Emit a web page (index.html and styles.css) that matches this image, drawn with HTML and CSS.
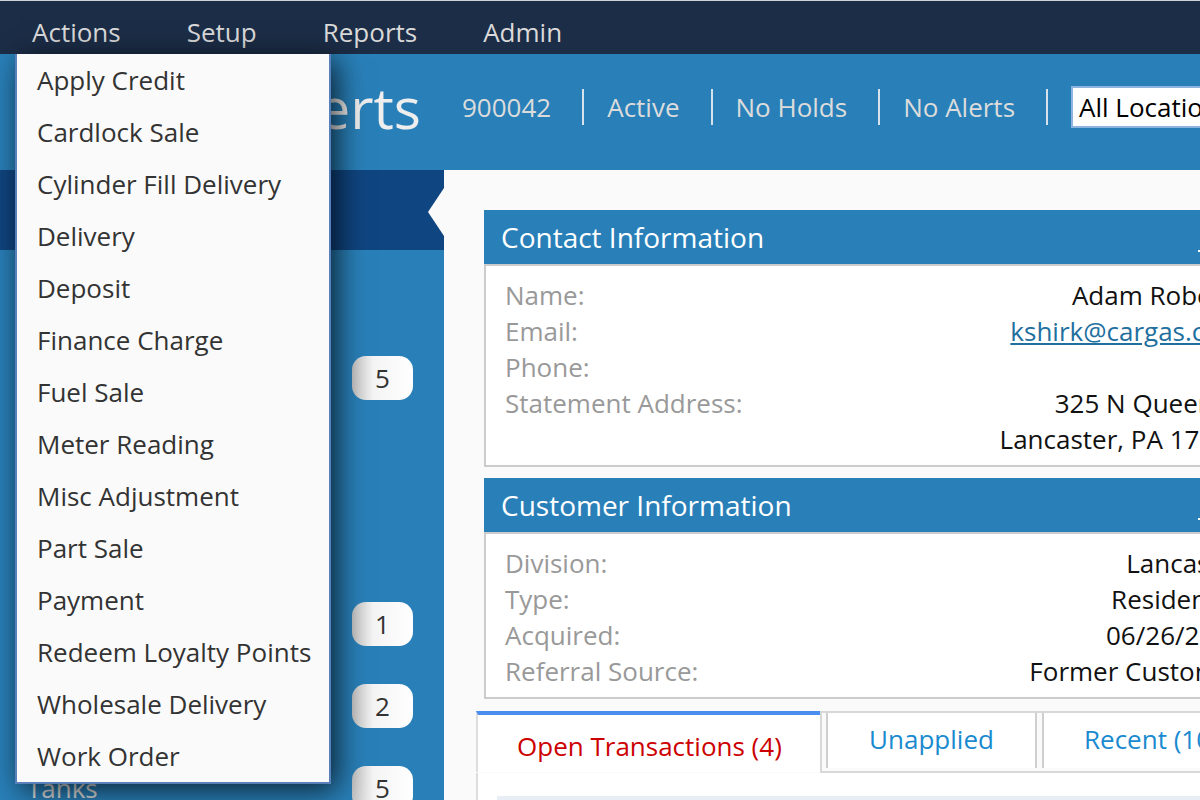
FILE: index.html
```html
<!DOCTYPE html>
<html lang="en">
<head>
<meta charset="utf-8">
<title>Customer - Adam Roberts</title>
<link rel="stylesheet" href="styles.css">
</head>
<body>
<div class="app">
  <nav class="topnav">
    <a class="nav-item">Actions</a>
    <a class="nav-item">Setup</a>
    <a class="nav-item">Reports</a>
    <a class="nav-item">Admin</a>
  </nav>

  <header class="hdr">
    <div class="title">Adam Roberts</div>
    <div class="status">
      <span>900042</span><i class="sep"></i>
      <span>Active</span><i class="sep"></i>
      <span>No Holds</span><i class="sep"></i>
      <span>No Alerts</span><i class="sep"></i>
    </div>
    <div class="select">All Locations</div>
  </header>

  <div class="content">
    <aside class="side">
      <div class="side-active">Account Summary</div>
      <ul class="side-list">
        <li><span>Contacts</span></li>
        <li><span>Notes</span><b class="badge">5</b></li>
        <li><span>Documents</span></li>
        <li><span>Budget</span></li>
        <li><span>Contracts</span><b class="badge">1</b></li>
        <li><span>Locations</span><b class="badge">2</b></li>
        <li><span>Tanks</span><b class="badge">5</b></li>
      </ul>
    </aside>

    <main class="main">
      <section class="panel">
        <div class="panel-head"><span>Contact Information</span><span class="minimize"></span></div>
        <div class="panel-body">
          <div class="row"><span class="lbl">Name:</span><span class="val">Adam Roberts</span></div>
          <div class="row"><span class="lbl">Email:</span><span class="val"><a class="link">kshirk@cargas.com</a></span></div>
          <div class="row"><span class="lbl">Phone:</span><span class="val"></span></div>
          <div class="row"><span class="lbl">Statement Address:</span><span class="val">325 N Queen St<br>Lancaster, PA 17603</span></div>
        </div>
      </section>

      <section class="panel panel-gap">
        <div class="panel-head"><span>Customer Information</span><span class="minimize"></span></div>
        <div class="panel-body">
          <div class="row"><span class="lbl">Division:</span><span class="val">Lancaster</span></div>
          <div class="row"><span class="lbl">Type:</span><span class="val">Residential</span></div>
          <div class="row"><span class="lbl">Acquired:</span><span class="val">06/26/2014</span></div>
          <div class="row"><span class="lbl">Referral Source:</span><span class="val">Former Customer</span></div>
        </div>
      </section>

      <div class="tabs">
        <div class="tab tab-active">Open Transactions (4)</div>
        <div class="tab-group">
          <div class="tab">Unapplied</div>
          <div class="tab">Recent (10)</div>
        </div>
      </div>
      <div class="tab-panel">
        <div class="grid-head"></div>
      </div>
    </main>
  </div>

  <ul class="menu">
    <li>Apply Credit</li>
    <li>Cardlock Sale</li>
    <li>Cylinder Fill Delivery</li>
    <li>Delivery</li>
    <li>Deposit</li>
    <li>Finance Charge</li>
    <li>Fuel Sale</li>
    <li>Meter Reading</li>
    <li>Misc Adjustment</li>
    <li>Part Sale</li>
    <li>Payment</li>
    <li>Redeem Loyalty Points</li>
    <li>Wholesale Delivery</li>
    <li>Work Order</li>
  </ul>
</div>
</body>
</html>
```

FILE: styles.css
```css
* { box-sizing: border-box; }

html, body {
  margin: 0;
  padding: 0;
  overflow: hidden;
}

body {
  font-family: "Open Sans", "Noto Sans", "DejaVu Sans", sans-serif;
  background: #fafafa;
}

.app {
  position: relative;
  width: 1200px;
  height: 800px;
  overflow: hidden;
}

/* top navigation */
.topnav {
  height: 54px;
  background: #1c2d47;
  border-top: 1px solid #cfd3d8;
  padding: 9px 0 0 32px;
  display: flex;
  gap: 66px;
}

.nav-item {
  font-size: 26px;
  line-height: 44px;
  color: #dadada;
}

/* header */
.hdr {
  height: 116px;
  background: #2980b9;
  display: flex;
  align-items: center;
  padding-bottom: 10px;
  white-space: nowrap;
}

.title {
  width: 421px;
  flex: none;
  text-align: right;
  font-size: 57px;
  line-height: 1;
  color: #eeeeee;
}

.status {
  display: flex;
  align-items: center;
  margin-left: 41px;
  font-size: 26px;
  line-height: 36px;
  color: #dcdcdc;
}

.sep {
  display: block;
  width: 2px;
  height: 36px;
  background: #d6e2ec;
  margin: 0 23px 0 31px;
}

.select {
  flex: none;
  width: 220px;
  height: 42px;
  margin-left: 0;
  background: #fff;
  border: 2px solid #8db4de;
  font-size: 26px;
  line-height: 38px;
  padding-left: 6px;
  color: #000;
}

/* content area */
.content {
  display: flex;
  height: 630px;
}

.side {
  width: 444px;
  flex: none;
  background: #2980b9;
}

.side-active {
  position: relative;
  height: 80px;
  background: #0f4581;
  color: #fff;
  font-size: 26px;
  line-height: 80px;
  padding-left: 27px;
}

.side-active::after {
  content: "";
  position: absolute;
  right: 0;
  top: 18px;
  border-right: 16px solid #fafafa;
  border-top: 24px solid transparent;
  border-bottom: 24px solid transparent;
}

.side-list {
  list-style: none;
  margin: 0;
  padding: 5px 0 0 0;
}

.side-list li {
  height: 82px;
  display: flex;
  align-items: center;
  justify-content: space-between;
  padding: 0 31px 0 27px;
  font-size: 26px;
  color: #e2e2e2;
}

.badge {
  width: 61px;
  height: 44px;
  border-radius: 14px;
  background: linear-gradient(to right, #c4c4c4 0%, #f4f4f4 35%, #ffffff 100%);
  color: #333;
  font-weight: normal;
  font-size: 26px;
  line-height: 44px;
  text-align: center;
}

.main {
  flex: 1;
  background: #fafafa;
  padding: 40px 0 0 40px;
  min-width: 0;
}

.panel {
  width: 782px;
}

.panel-gap {
  margin-top: 11px;
}

.panel-head {
  height: 54px;
  background: #2980b9;
  color: #fff;
  font-size: 28px;
  line-height: 54px;
  padding-left: 17px;
  display: flex;
  justify-content: space-between;
}

.minimize {
  width: 14px;
  height: 2px;
  background: #fff;
  margin: 40px 54px 0 0;
}

.panel-body {
  background: #fff;
  border: 2px solid #cccccc;
  padding: 11px 20px 8px 19px;
  font-size: 26px;
  line-height: 36px;
}

.row {
  display: flex;
  justify-content: space-between;
  min-height: 36px;
}

.lbl {
  color: #999999;
}

.val {
  color: #111111;
  text-align: right;
}

.link {
  color: #1f6f9f;
  text-decoration: underline;
}

/* tabs */
.tabs {
  display: flex;
  align-items: flex-start;
  margin: 12px 0 0 -8px;
  width: 800px;
}

.tab {
  font-size: 26px;
  line-height: 36px;
  color: #1a8ad0;
  background: #fff;
}

.tab-active {
  width: 344px;
  flex: none;
  height: 61px;
  border-top: 4px solid #4a8ff0;
  border-left: 2px solid #dddddd;
  color: #cc0000;
  padding: 13px 0 0 39px;
}

.tab-group {
  flex: 1;
  display: flex;
  gap: 5px;
  border: 2px solid #d8d8d8;
  border-right: none;
  padding: 0 0 3px 4px;
  height: 62px;
  align-items: stretch;
}

.tab-group .tab {
  border: 2px solid #cfcfcf;
  border-bottom: none;
  border-top: none;
  padding: 8px 0 0 0;
  text-align: center;
}

.tab-group .tab:first-child {
  width: 211px;
  flex: none;
}

.tab-group .tab:last-child {
  flex: 1;
  text-align: left;
  padding-left: 40px;
}

.tab-panel {
  margin-left: -8px;
  border-left: 2px solid #dddddd;
  background: #fff;
  padding: 23px 0 0 19px;
  height: 60px;
}

.grid-head {
  height: 30px;
  background: #e8eef5;
}

/* actions dropdown */
.menu {
  position: absolute;
  left: 15px;
  top: 54px;
  width: 316px;
  margin: 0;
  padding: 0;
  list-style: none;
  background: #fafafa;
  border: 2px solid #5a80bb;
  border-top: none;
  box-shadow: 6px 6px 28px rgba(0, 0, 0, 0.75);
}

.menu li {
  height: 52px;
  line-height: 52px;
  padding-left: 20px;
  font-size: 26px;
  color: #333333;
  white-space: nowrap;
}
```
